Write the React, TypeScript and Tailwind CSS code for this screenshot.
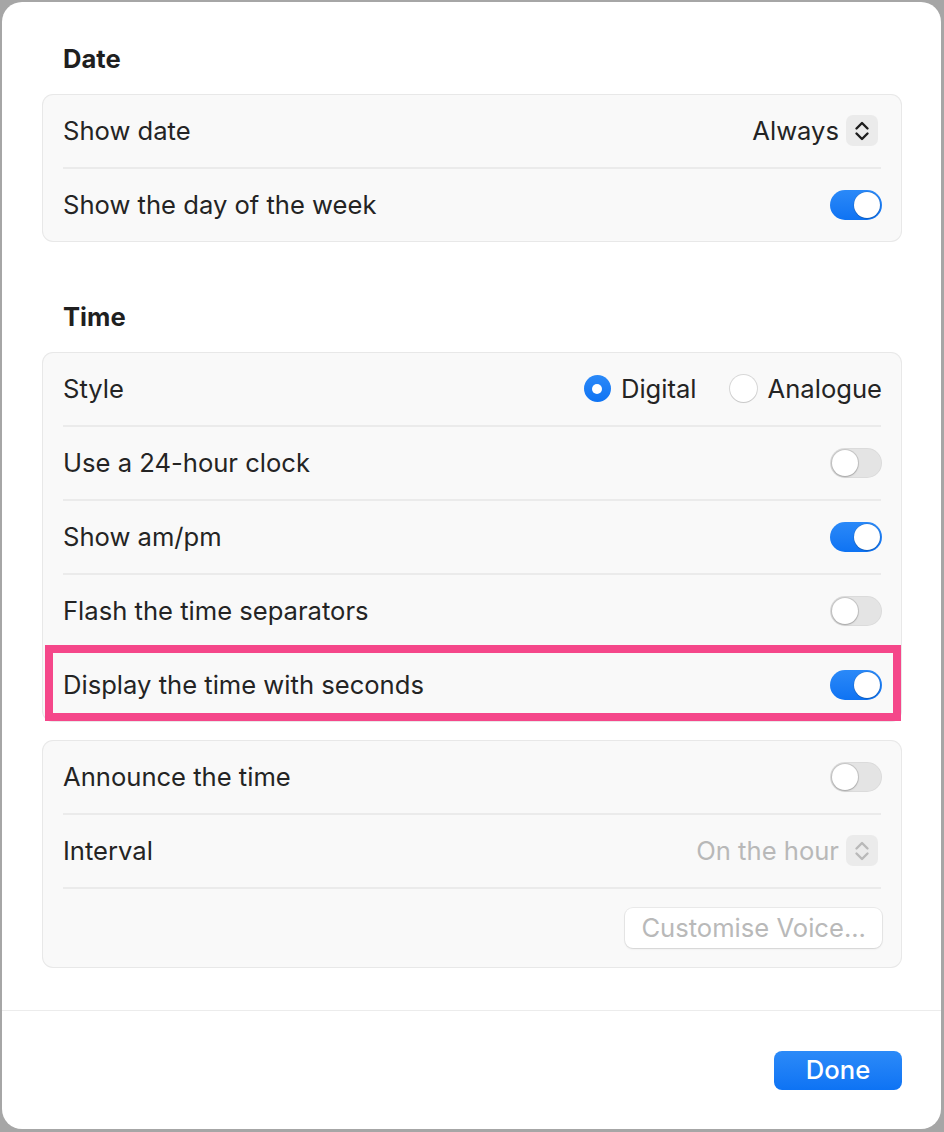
import React from "react";

const FONT = { fontFamily: "Inter, 'Liberation Sans', sans-serif" };

function Toggle({ on }: { on: boolean }) {
  return on ? (
    <div className="relative w-[52px] h-[30px] rounded-full bg-gradient-to-b from-[#2a89f8] to-[#0e73f3] mr-0">
      <div className="absolute right-[2px] top-[2px] w-[26px] h-[26px] rounded-full bg-white shadow-[0_0_0_0.5px_rgba(0,0,0,0.15),0_1px_1px_rgba(0,0,0,0.15)]" />
    </div>
  ) : (
    <div className="relative w-[52px] h-[30px] rounded-full bg-[#e4e4e4] shadow-[inset_0_0_0_1px_rgba(0,0,0,0.04)]">
      <div className="absolute left-[2px] top-[2px] w-[26px] h-[26px] rounded-full bg-white shadow-[0_0_0_1px_rgba(0,0,0,0.12),0_1px_2px_rgba(0,0,0,0.18)]" />
    </div>
  );
}

function Stepper({ disabled }: { disabled?: boolean }) {
  const c = disabled ? "#b9b9b9" : "#1e1e1e";
  return (
    <div className="w-[32px] h-[31px] rounded-[7px] bg-[#ebebeb] flex items-center justify-center mr-[4px]">
      <svg width="18" height="24" viewBox="0 0 18 24" fill="none">
        <path d="M3.5 9.5 L9 4 L14.5 9.5" stroke={c} strokeWidth="2.4" strokeLinecap="round" strokeLinejoin="round" />
        <path d="M3.5 14.5 L9 20 L14.5 14.5" stroke={c} strokeWidth="2.4" strokeLinecap="round" strokeLinejoin="round" />
      </svg>
    </div>
  );
}

function Row({ label, children, disabledLabel }: { label: string; children?: React.ReactNode; disabledLabel?: boolean }) {
  return (
    <div className="h-[72px] flex items-center justify-between pl-[20px] pr-[19px]">
      <span className={"pt-[1px] " + (disabledLabel ? "text-[#b5b5b5]" : "text-[#242424]")}>{label}</span>
      <div className="flex items-center">{children}</div>
    </div>
  );
}

function Divider() {
  return (
    <div className="h-[2px] flex items-center px-[20px]">
      <div className="h-[1.5px] w-full bg-[#ebebeb]" />
    </div>
  );
}

function Card({ children }: { children: React.ReactNode }) {
  return (
    <div className="rounded-[10px] bg-[#f9f9f9] shadow-[0_0_0_1px_#e8e8e8]">{children}</div>
  );
}

function Heading({ children }: { children: React.ReactNode }) {
  return <div className="h-[32px] flex items-center pt-[1px] pl-[20px] font-bold text-[#1f1f1f] text-[25.6px]">{children}</div>;
}

export default function App() {
  return (
    <div className="w-[944px] h-[1132px] bg-[#a6a6a6] pt-[2px] pl-[2px]" style={FONT}>
      <div className="w-[939px] h-[1127px] bg-white rounded-[20px] flex flex-col text-[25.6px] overflow-hidden">
        <div className="flex-1 pt-[41px] pl-[41px] pr-[40px]">
          <Heading>Date</Heading>
          <div className="h-[20px]" />
          <Card>
            <Row label="Show date">
              <span className="pt-[1px] text-[#242424] mr-[7px]">Always</span>
              <Stepper />
            </Row>
            <Divider />
            <Row label="Show the day of the week">
              <Toggle on />
            </Row>
          </Card>
          <div className="h-[60px]" />
          <Heading>Time</Heading>
          <div className="h-[20px]" />
          <div className="relative">
            <Card>
              <Row label="Style">
                <div className="flex items-center">
                  <div className="w-[27px] h-[27px] rounded-full bg-gradient-to-b from-[#2a89f8] to-[#0e73f3] flex items-center justify-center">
                    <div className="w-[10px] h-[10px] rounded-full bg-white" />
                  </div>
                  <span className="pt-[1px] ml-[10px] text-[#242424]">Digital</span>
                  <div className="ml-[33px] w-[27px] h-[27px] rounded-full bg-white shadow-[0_0_0_1px_rgba(0,0,0,0.13),0_1px_1px_rgba(0,0,0,0.08)]" />
                  <span className="pt-[1px] ml-[11px] text-[#242424]">Analogue</span>
                </div>
              </Row>
              <Divider />
              <Row label="Use a 24-hour clock">
                <Toggle on={false} />
              </Row>
              <Divider />
              <Row label="Show am/pm">
                <Toggle on />
              </Row>
              <Divider />
              <Row label="Flash the time separators">
                <Toggle on={false} />
              </Row>
              <Divider />
              <Row label="Display the time with seconds">
                <Toggle on />
              </Row>
            </Card>
            <div className="absolute left-[2px] right-[0px] bottom-[0px] h-[76px] border-[8px] border-[#f5478a] pointer-events-none" />
          </div>
          <div className="h-[20px]" />
          <Card>
            <Row label="Announce the time">
              <Toggle on={false} />
            </Row>
            <Divider />
            <Row label="Interval">
              <span className="pt-[1px] text-[#b8b8b8] mr-[7px]">On the hour</span>
              <Stepper disabled />
            </Row>
            <Divider />
            <div className="h-[78px] flex items-center justify-end pr-[19px]">
              <div className="h-[40px] px-[16px] pt-[1px] rounded-[8px] bg-white shadow-[0_0_0_1px_rgba(0,0,0,0.06),0_1px_2px_rgba(0,0,0,0.1)] flex items-center text-[#b9b9b9]">
                Customise Voice...
              </div>
            </div>
          </Card>
        </div>
        <div className="h-[1.5px] bg-[#ececec]" />
        <div className="h-[118px] flex items-center justify-end pr-[39px]">
          <div className="w-[128px] h-[39px] rounded-[8px] bg-gradient-to-b from-[#2b8af8] to-[#0d73f4] text-white flex items-center justify-center font-medium">
            Done
          </div>
        </div>
      </div>
    </div>
  );
}
